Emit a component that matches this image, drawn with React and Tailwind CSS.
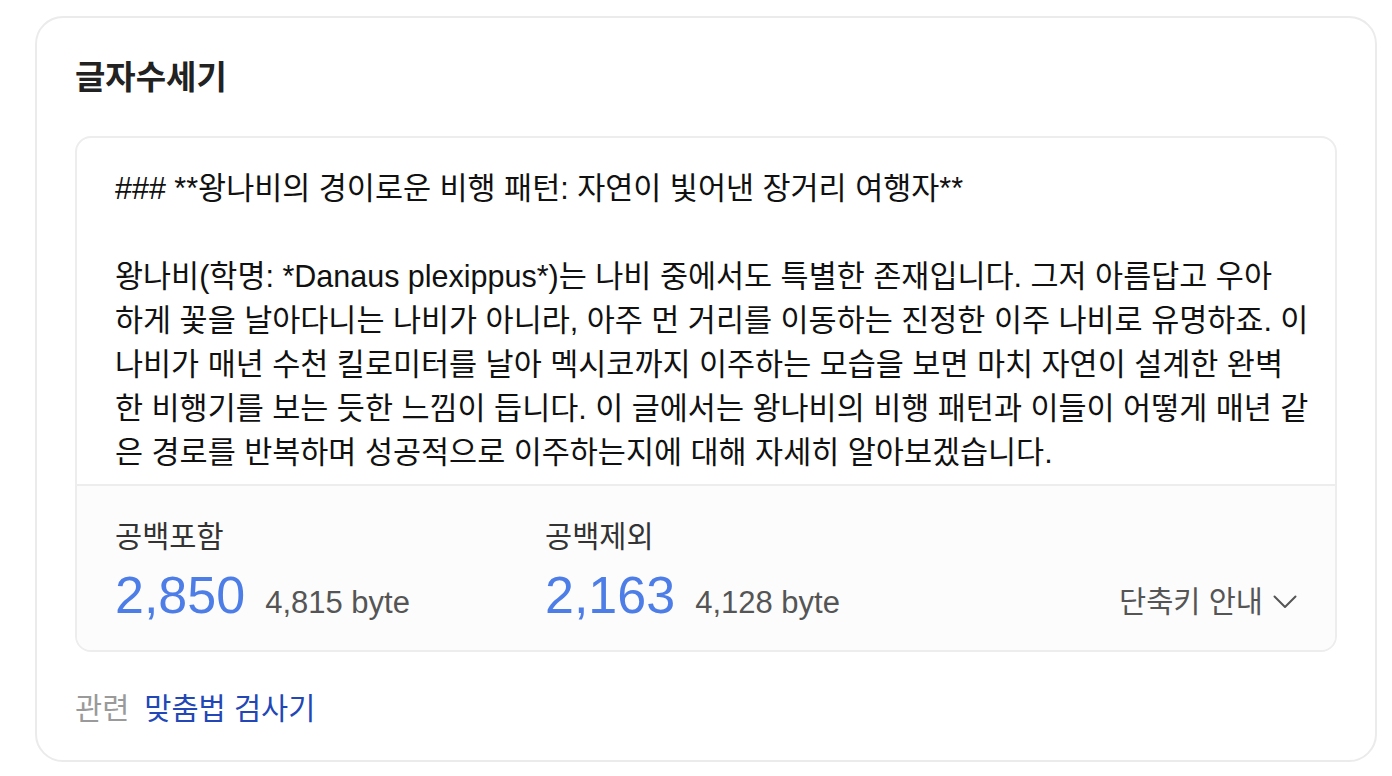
import React from "react";

const FONT = { fontFamily: '"Liberation Sans", "Noto Sans CJK KR", sans-serif' };

const lines = [
  "왕나비(학명: *Danaus plexippus*)는 나비 중에서도 특별한 존재입니다. 그저 아름답고 우아",
  "하게 꽃을 날아다니는 나비가 아니라, 아주 먼 거리를 이동하는 진정한 이주 나비로 유명하죠. 이",
  "나비가 매년 수천 킬로미터를 날아 멕시코까지 이주하는 모습을 보면 마치 자연이 설계한 완벽",
  "한 비행기를 보는 듯한 느낌이 듭니다. 이 글에서는 왕나비의 비행 패턴과 이들이 어떻게 매년 같",
  "은 경로를 반복하며 성공적으로 이주하는지에 대해 자세히 알아보겠습니다.",
];

export default function App() {
  return (
    <div className="w-[1392px] h-[776px] bg-white pl-[35px] pt-[16px]" style={FONT}>
      <div className="w-[1342px] h-[746px] border-2 border-[#ebebeb] rounded-[28px] px-[38px] pt-[40px]">
        <div className="h-[40px] leading-[40px] text-[33px] font-bold text-[#222]">글자수세기</div>

        <div className="mt-[38px] rounded-[16px] border-2 border-[#ededed] overflow-hidden">
          <div className="h-[346px] px-[38px] pt-[28px] text-[30.5px] leading-[44px] text-[#111] whitespace-nowrap">
            <div>### **왕나비의 경이로운 비행 패턴: 자연이 빛어낸 장거리 여행자**</div>
            <div className="h-[44px]"></div>
            {lines.map((l, i) => (
              <div key={i}>{l}</div>
            ))}
          </div>
          <div className="border-t-2 border-[#ededed] bg-[#fcfcfc] h-[166px] px-[38px] flex">
            <div className="w-[430px] pt-[33px]">
              <div className="text-[29.5px] leading-[36px] text-[#333]">공백포함</div>
              <div className="mt-[10px] flex items-baseline gap-[20px]">
                <span className="text-[52px] leading-[60px] text-[#4d7de6]">2,850</span>
                <span className="text-[31px] leading-[36px] text-[#555]">4,815 byte</span>
              </div>
            </div>
            <div className="pt-[33px]">
              <div className="text-[29.5px] leading-[36px] text-[#333]">공백제외</div>
              <div className="mt-[10px] flex items-baseline gap-[20px]">
                <span className="text-[52px] leading-[60px] text-[#4d7de6]">2,163</span>
                <span className="text-[31px] leading-[36px] text-[#555]">4,128 byte</span>
              </div>
            </div>
            <div className="ml-auto pt-[98px] flex items-center gap-[10px] h-fit">
              <span className="text-[29.5px] leading-[36px] text-[#555]">단축키 안내</span>
              <svg width="24" height="14" viewBox="0 0 24 14" fill="none">
                <path d="M1.5 1.5 L12 12 L22.5 1.5" stroke="#555" strokeWidth="2" strokeLinecap="round" strokeLinejoin="round" />
              </svg>
            </div>
          </div>
        </div>

        <div className="mt-[39px] flex items-center gap-[15px] text-[29.5px] leading-[36px]">
          <span className="text-[#9a9a9a]">관련</span>
          <span className="text-[#2347b6]">맞춤법 검사기</span>
        </div>
      </div>
    </div>
  );
}
